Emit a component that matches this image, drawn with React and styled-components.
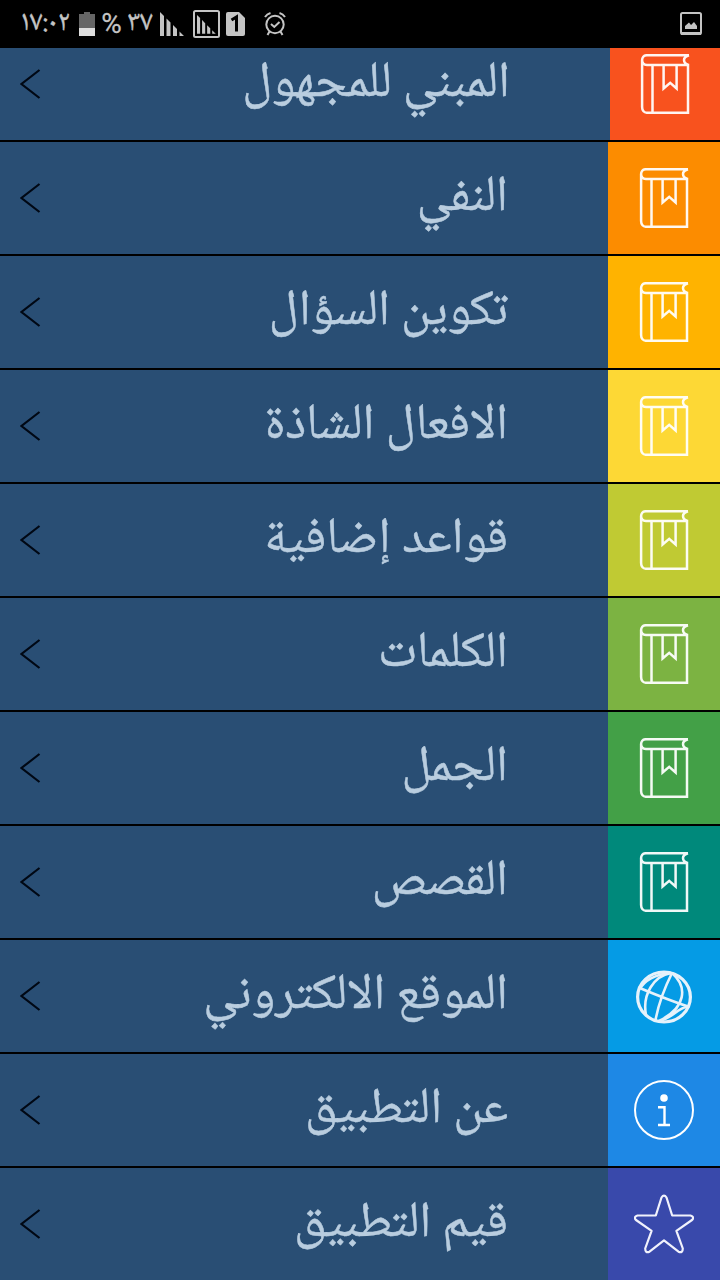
import React from 'react';
import styled, { createGlobalStyle } from 'styled-components';

const GlobalStyle = createGlobalStyle`
  body {
    margin: 0;
    background-color: #000;
  }
`;

const Screen = styled.div`
  display: flex;
  flex-direction: column;
  width: 720px;
  height: 1280px;
  overflow: hidden;
  background-color: #000;
`;

const StatusBar = styled.header`
  display: flex;
  align-items: center;
  flex-shrink: 0;
  box-sizing: border-box;
  height: 48px;
  padding: 0 18px 0 20px;
  color: #c4c4c4;
`;

const StatusText = styled.span`
  display: flex;
  align-items: center;
  justify-content: center;
  direction: ltr;
  unicode-bidi: bidi-override;
  flex-shrink: 0;
  width: ${(props) => props.$width}px;
  height: 44px;
  padding-bottom: ${(props) => props.$raise || 0}px;
  font-family: ${(props) => props.$font || "'Noto Naskh Arabic UI', 'Noto Sans Arabic', 'DejaVu Sans'"}, sans-serif;
  font-size: ${(props) => props.$size}px;
  line-height: 1;
  white-space: nowrap;
  -webkit-text-stroke: 0.3px #c4c4c4;
`;

const StatusIcon = styled.svg`
  flex-shrink: 0;
  margin-left: ${(props) => props.$gap || 0}px;
`;

const Spacer = styled.div`
  flex: 1;
`;

const List = styled.ul`
  display: flex;
  flex-direction: column;
  flex: 1;
  margin: 0;
  padding: 0;
  overflow: hidden;
  list-style: none;
`;

const Row = styled.li`
  display: flex;
  align-items: stretch;
  flex-shrink: 0;
  height: 112px;
  border-bottom: 2px solid #000;
  background-color: #294e74;
  &:first-child {
    margin-top: -20px;
  }
`;

const Chevron = styled.svg`
  flex-shrink: 0;
  align-self: center;
  margin-left: 20px;
`;

const Label = styled.span`
  flex: 1;
  padding-right: 100px;
  direction: rtl;
  color: #b9cddf;
  font-family: 'Noto Naskh Arabic UI', 'Noto Sans Arabic', 'DejaVu Sans', sans-serif;
  font-size: 50.2px;
  line-height: 112px;
  white-space: nowrap;
  -webkit-text-stroke: 0.5px #b9cddf;
`;

const Tile = styled.div`
  display: flex;
  align-items: center;
  justify-content: center;
  flex-shrink: 0;
  width: ${(props) => props.$width || 112}px;
  background-color: ${(props) => props.$color};
`;

const BookIcon = () => (
  <svg width="60" height="60" viewBox="0 0 60 60" fill="none" stroke="#fff" strokeOpacity=".94" strokeWidth="2.5">
    <path d="M54 1.2H12C8.5 1.2 7.1 3.6 7.1 6.1C7.1 9 9 11 12 11H53V58.8H12.5C9 58.8 7.1 56.5 7.1 53V6M54 1.2C50.8 2.2 49 3.8 49 6.1C49 8.4 50.5 10.2 53.5 11M17.5 11V58.8M28.6 11V34.5L35.2 28.8L41.6 34.5V11" />
  </svg>
);

const GlobeIcon = () => (
  <svg width="60" height="60" viewBox="0 0 60 60" fill="none" stroke="#e6f2fb" strokeWidth="2.6">
    <ellipse cx="30" cy="31" rx="26.4" ry="25" strokeWidth="3.2" />
    <path d="M4.5 21.5C20 28 37 35 55.5 41M38 7C32 19 25 35 21.5 54" />
    <path d="M37 7C20 10 8 28 12 49M38 7C54 21 52 42 25 55M25 55C38 53 45 40 54 41" />
    <path d="M6 23C10 15 21 8 37 7" />
  </svg>
);

const InfoIcon = () => (
  <svg width="60" height="60" viewBox="0 0 60 60" fill="none" stroke="#fff" strokeWidth="2">
    <circle cx="30" cy="30" r="29" />
    <circle cx="30" cy="18" r="3.8" fill="#fff" stroke="none" />
    <path d="M24 27.3H30.5V45M24 45H36" strokeWidth="2.4" />
  </svg>
);

const StarIcon = () => (
  <svg width="60" height="60" viewBox="0 0 60 60" fill="none" stroke="#f1f2fc" strokeWidth="2.2" strokeLinejoin="round">
    <path d="M27.5 3.5Q30 -.2 32.5 3.5L38.2 21.5H56.5Q60.8 23 58 26L42.4 36.8L48.8 54.5Q48.8 59.5 44.5 57.7L30 46.4L15.5 57.7Q11.2 59.5 11.2 54.5L17.6 36.8L2 26Q-.8 23 3.5 21.5H21.8Z" />
  </svg>
);

const SignalBars = () => <path d="M0 0L4 4V24H0ZM6.5 6.5L10.5 10.5V24H6.5ZM13 13L17 17V24H13ZM19.5 19.5L24 24H19.5Z" fill="#c4c4c4" />;

const items = [
  { text: 'المبني للمجهول', color: '#f8521e', icon: BookIcon, tileWidth: 110 },
  { text: 'النفي', color: '#fc8c00', icon: BookIcon },
  { text: 'تكوين السؤال', color: '#ffb300', icon: BookIcon },
  { text: 'الافعال الشاذة', color: '#fdd835', icon: BookIcon },
  { text: 'قواعد إضافية', color: '#c0ca33', icon: BookIcon },
  { text: 'الكلمات', color: '#7cb342', icon: BookIcon },
  { text: 'الجمل', color: '#43a047', icon: BookIcon },
  { text: 'القصص', color: '#00897b', icon: BookIcon },
  { text: 'الموقع الالكتروني', color: '#059be5', icon: GlobeIcon },
  { text: 'عن التطبيق', color: '#1e88e5', icon: InfoIcon },
  { text: 'قيم التطبيق', color: '#3949ab', icon: StarIcon },
];

const App = () => (
  <>
    <GlobalStyle />
    <Screen>
      <StatusBar>
        <StatusText $width={50} $size={29} $raise={4}>١٧:٠٢</StatusText>
        <StatusIcon $gap={9} width="16" height="24" viewBox="0 0 16 24">
          <path d="M0 2H5V0H11V2H16V16H0Z" fill="#666" />
          <path d="M0 16H16V24H0Z" fill="#dedede" />
        </StatusIcon>
        <StatusText $width={33} $size={28} $font="Roboto">%</StatusText>
        <StatusText $width={23} $size={29} $raise={4}>٣٧</StatusText>
        <StatusIcon $gap={9} width="24" height="24" viewBox="0 0 24 24">
          <SignalBars />
        </StatusIcon>
        <StatusIcon $gap={9} width="27" height="28" viewBox="0 0 27 28">
          <rect x="1" y="1" width="25" height="26" rx="1.5" fill="none" stroke="#c4c4c4" strokeWidth="2" />
          <g transform="translate(4 5) scale(.78)">
            <SignalBars />
          </g>
        </StatusIcon>
        <StatusIcon $gap={6} width="19" height="24" viewBox="0 0 19 24">
          <path d="M2 0H13L19 6V22Q19 24 17 24H2Q0 24 0 22V2Q0 0 2 0Z" fill="#c4c4c4" />
          <path d="M5.5 8L10.5 5V19.5" fill="none" stroke="#000" strokeWidth="3" />
        </StatusIcon>
        <StatusIcon $gap={19} width="22" height="24" viewBox="0 0 22 24" fill="none" stroke="#c4c4c4" strokeWidth="2">
          <circle cx="11" cy="12.5" r="8.7" />
          <path d="M1 5Q3 2 6.5 1M21 5Q19 2 15.5 1M5.5 19.5L3.5 23M16.5 19.5L18.5 23M7 12L10.3 15L15.5 10" />
        </StatusIcon>
        <Spacer />
        <StatusIcon width="22" height="24" viewBox="0 0 22 24">
          <rect x="1" y="1" width="20" height="21" rx="1.5" fill="none" stroke="#c4c4c4" strokeWidth="2" />
          <path d="M1 20H21V23H1ZM5 17V14L9 10.5L11 13L14 10L17 14V17Z" fill="#c4c4c4" />
        </StatusIcon>
      </StatusBar>
      <List>
        {items.map(({ text, color, icon: Icon, tileWidth }) => (
          <Row key={text}>
            <Chevron width="21" height="30" viewBox="0 0 21 30" fill="none" stroke="#000814" strokeWidth="2.2">
              <path d="M19.5 1L1.5 15L19.5 29" />
            </Chevron>
            <Label>{text}</Label>
            <Tile $color={color} $width={tileWidth}>
              <Icon />
            </Tile>
          </Row>
        ))}
      </List>
    </Screen>
  </>
);

export default App;
